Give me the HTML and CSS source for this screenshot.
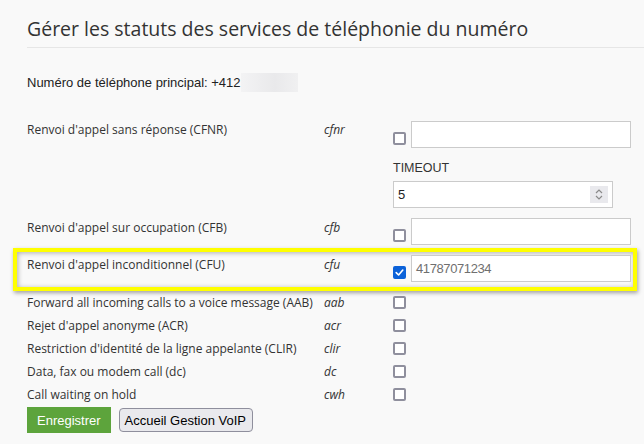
FILE: index.html
```html
<!DOCTYPE html>
<html lang="fr">
<head>
<meta charset="utf-8">
<title>Services de téléphonie</title>
<link rel="stylesheet" href="styles.css">
</head>
<body>
<div class="page">
  <h1 class="title">Gérer les statuts des services de téléphonie du numéro</h1>
  <p class="main-number">Numéro de téléphone principal: +412<span class="redact"></span></p>

  <div class="form">
    <div class="row">
      <div class="label">Renvoi d'appel sans réponse (CFNR)</div>
      <div class="code">cfnr</div>
      <div class="ctrl">
        <div class="line"><span class="cb"></span><span class="field"></span></div>
        <div class="timeout">TIMEOUT</div>
        <div class="number"><span class="num-val">5</span><span class="spin"><svg width="10" height="13" viewBox="0 0 10 13"><path d="M2 5 L5 2 L8 5" fill="none" stroke="#8a8a8a" stroke-width="1.2"/><path d="M2 8 L5 11 L8 8" fill="none" stroke="#8a8a8a" stroke-width="1.2"/></svg></span></div>
      </div>
    </div>

    <div class="row row-cfb">
      <div class="label">Renvoi d'appel sur occupation (CFB)</div>
      <div class="code">cfb</div>
      <div class="ctrl">
        <div class="line"><span class="cb"></span><span class="field"></span></div>
      </div>
    </div>

    <div class="row highlight">
      <div class="label">Renvoi d'appel inconditionnel (CFU)</div>
      <div class="code">cfu</div>
      <div class="ctrl">
        <div class="line"><span class="cb on"><svg width="9" height="9" viewBox="0 0 9 9"><path d="M1.2 4.6 L3.6 7 L7.8 2" fill="none" stroke="#fff" stroke-width="1.6" stroke-linecap="round" stroke-linejoin="round"/></svg></span><span class="field value">41787071234</span></div>
      </div>
    </div>

    <div class="row simple">
      <div class="label">Forward all incoming calls to a voice message (AAB)</div>
      <div class="code">aab</div>
      <div class="ctrl"><span class="cb"></span></div>
    </div>
    <div class="row simple">
      <div class="label">Rejet d'appel anonyme (ACR)</div>
      <div class="code">acr</div>
      <div class="ctrl"><span class="cb"></span></div>
    </div>
    <div class="row simple">
      <div class="label">Restriction d'identité de la ligne appelante (CLIR)</div>
      <div class="code">clir</div>
      <div class="ctrl"><span class="cb"></span></div>
    </div>
    <div class="row simple">
      <div class="label">Data, fax ou modem call (dc)</div>
      <div class="code">dc</div>
      <div class="ctrl"><span class="cb"></span></div>
    </div>
    <div class="row simple">
      <div class="label">Call waiting on hold</div>
      <div class="code">cwh</div>
      <div class="ctrl"><span class="cb"></span></div>
    </div>

    <div class="actions">
      <button class="btn-save" type="button">Enregistrer</button>
      <button class="btn-home" type="button">Accueil Gestion VoIP</button>
    </div>
  </div>
</div>
</body>
</html>
```

FILE: styles.css
```css
* { box-sizing: border-box; }

body {
  margin: 0;
  background: #f9f9f9;
  color: #333;
  font-family: "Open Sans", sans-serif;
}

.page {
  padding-left: 27px;
}

.title {
  margin: 0;
  padding: 15px 0 4px;
  font-size: 19.5px;
  line-height: 28px;
  font-weight: 400;
  color: #333;
  border-bottom: 1px solid #e6e6e6;
}

.main-number {
  margin: 25px 0 0;
  display: flex;
  align-items: center;
  font-family: "Liberation Sans", Arial, sans-serif;
  font-size: 13px;
  line-height: 18px;
  color: #222;
}

.redact {
  display: inline-block;
  width: 57px;
  height: 19px;
  background: linear-gradient(90deg, #f3f3f4, #e9e9eb 60%, #f0f0f1);
}

.form {
  margin-top: 29px;
  width: 604px;
}

.row {
  display: grid;
  grid-template-columns: 297px 69px 238px;
  align-items: start;
}

.label {
  font-size: 12px;
  line-height: 18px;
  color: #333;
}

.code {
  font-size: 12px;
  line-height: 18px;
  font-style: italic;
  color: #333;
}

.line {
  display: flex;
  align-items: flex-end;
  gap: 5px;
}

.line .cb {
  margin-bottom: 3px;
}

.cb {
  display: inline-flex;
  align-items: center;
  justify-content: center;
  width: 13px;
  height: 13px;
  border: 2px solid #8f8f9d;
  border-radius: 2px;
  background: #fff;
  flex: none;
}

.cb.on {
  background: #0b62d9;
  border-color: #0b62d9;
}

.field {
  display: flex;
  align-items: center;
  width: 220px;
  height: 27px;
  border: 1px solid #cbcbcb;
  background: #fff;
  padding-left: 4px;
}

.field.value {
  font-family: "Liberation Sans", Arial, sans-serif;
  font-size: 13px;
  letter-spacing: -0.4px;
  color: #6f6f6f;
}

.timeout {
  margin-top: 11px;
  font-family: "Liberation Sans", Arial, sans-serif;
  font-size: 12.5px;
  line-height: 18px;
  color: #333;
}

.number {
  margin-top: 4px;
  width: 220px;
  height: 27px;
  border: 1px solid #cbcbcb;
  background: #fff;
  display: flex;
  align-items: center;
  justify-content: space-between;
  padding: 0 4px 0 4px;
}

.num-val {
  font-family: "Liberation Sans", Arial, sans-serif;
  font-size: 13px;
  color: #222;
}

.spin {
  display: flex;
  align-items: center;
  justify-content: center;
  width: 18px;
  height: 17px;
  background: #e9e9ed;
}

.row-cfb {
  margin-top: 10px;
}

.row-cfb .label,
.row-cfb .code {
  padding-top: 1px;
}

.highlight {
  margin: 3px -6px 0 -14px;
  padding: 3px 2px 5px 10px;
  border: 4px solid #ffff00;
  box-shadow: 1px 2px 4px rgba(0, 0, 0, 0.35), inset 1px 1px 5px rgba(0, 0, 0, 0.3);
}

.highlight .label,
.highlight .code {
  padding-top: 1px;
}

.simple {
  height: 23px;
  align-items: center;
}

.actions {
  margin-top: 1px;
  display: flex;
  align-items: center;
  gap: 8px;
}

.btn-save {
  height: 26px;
  padding: 0 10px;
  border: none;
  background: #5da43c;
  color: #fff;
  font-family: "Liberation Sans", Arial, sans-serif;
  font-size: 13px;
}

.btn-home {
  height: 24px;
  padding: 0 6px 0 5px;
  border: 1px solid #8f8f9d;
  border-radius: 4px;
  background: #e9e9ed;
  color: #000;
  font-family: "Liberation Sans", Arial, sans-serif;
  font-size: 13px;
}
```
